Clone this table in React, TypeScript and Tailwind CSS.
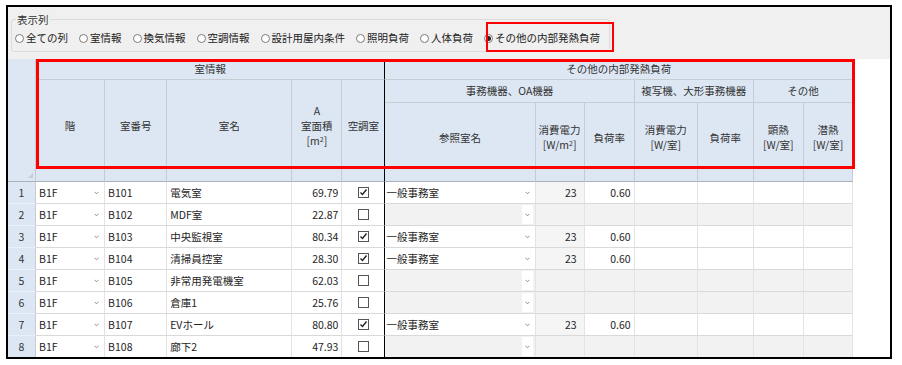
import React from "react";

const options = [
  "全ての列",
  "室情報",
  "換気情報",
  "空調情報",
  "設計用屋内条件",
  "照明負荷",
  "人体負荷",
  "その他の内部発熱負荷",
];

const rows = [
  { no: 1, floor: "B1F", num: "B101", name: "電気室", area: "69.79", ac: true, ref: "一般事務室" },
  { no: 2, floor: "B1F", num: "B102", name: "MDF室", area: "22.87", ac: false, ref: "" },
  { no: 3, floor: "B1F", num: "B103", name: "中央監視室", area: "80.34", ac: true, ref: "一般事務室" },
  { no: 4, floor: "B1F", num: "B104", name: "清掃員控室", area: "28.30", ac: true, ref: "一般事務室" },
  { no: 5, floor: "B1F", num: "B105", name: "非常用発電機室", area: "62.03", ac: false, ref: "" },
  { no: 6, floor: "B1F", num: "B106", name: "倉庫1", area: "25.76", ac: false, ref: "" },
  { no: 7, floor: "B1F", num: "B107", name: "EVホール", area: "80.80", ac: true, ref: "一般事務室" },
  { no: 8, floor: "B1F", num: "B108", name: "廊下2", area: "47.93", ac: false, ref: "" },
];

const widths = [28, 69, 62, 125, 50, 43, 150, 49, 50, 63, 56, 50, 49];

const Chevron = () => (
  <svg width="5" height="4" viewBox="0 0 5 4" className="block">
    <polyline points="0.5,0.8 2.5,2.8 4.5,0.8" fill="none" stroke="#8a8a8a" strokeWidth="1" />
  </svg>
);

const Radio = ({ label, checked }: { label: string; checked?: boolean }) => (
  <span className="flex items-center gap-[2px] shrink-0 whitespace-nowrap">
    <span className="w-[9px] h-[9px] rounded-full border border-[#7a7a7a] bg-white flex items-center justify-center">
      {checked && <span className="w-[5px] h-[5px] rounded-full bg-[#222]" />}
    </span>
    <span>{label}</span>
  </span>
);

const Check = ({ on }: { on: boolean }) => (
  <span className="mx-auto block w-[11px] h-[11px] border border-[#555] bg-white">
    {on && (
      <svg width="9" height="9" viewBox="0 0 9 9" className="block">
        <polyline points="1.5,4.5 3.5,6.5 7.5,1.5" fill="none" stroke="#222" strokeWidth="1.4" />
      </svg>
    )}
  </span>
);

const hd = "bg-[#dde7f3] border-r border-b border-[#c6ccd4] font-normal text-[#333] text-center";
const leaf = "bg-[#dde7f3] border-r border-b border-r-[#c6ccd4] border-b-[#aab1ba] font-normal text-[#333] text-center leading-[15px] pb-[10px]";
const td = "h-[22px] border-r border-b border-r-[#e3e3e3] border-b-[#d9d9d9] px-[3px] whitespace-nowrap overflow-hidden";

export default function App() {
  return (
    <div className="w-[902px] h-[365px] bg-white pt-[5px] pl-[6px] font-['Noto_Sans_CJK_JP',sans-serif] text-[10.5px] text-[#1e1e1e]">
      <div className="relative w-[886px] h-[354px] border-2 border-black flex flex-col overflow-hidden">
        <div className="h-[52px] bg-[#f0f0f0] pl-[3px] pt-[6px] shrink-0">
          <fieldset className="w-[599px] h-[39px] border border-[#dcdcdc] rounded-[3px] px-[3px]">
            <legend className="ml-[1px] px-[1px] leading-[13px] text-[#333]">表示列</legend>
            <div className="flex items-center gap-[11px] mt-[5px] leading-[14px] text-[#222]">
              {options.map((o, i) => (
                <Radio key={o} label={o} checked={i === options.length - 1} />
              ))}
            </div>
          </fieldset>
        </div>

        <div className="flex-1 bg-white">
          <table className="table-fixed border-separate border-spacing-0 w-[845px]">
            <colgroup>
              {widths.map((w, i) => (
                <col key={i} style={{ width: w }} />
              ))}
            </colgroup>
            <thead>
              <tr className="h-[21px]">
                <th rowSpan={3} className="relative bg-[#dde7f3] border-r border-b border-r-[#c6ccd4] border-b-[#aab1ba]">
                  <svg width="5" height="5" viewBox="0 0 5 5" className="absolute right-[2px] bottom-[3px]">
                    <polygon points="5,0 5,5 0,5" fill="#c3ccd8" />
                  </svg>
                </th>
                <th colSpan={5} className={`${hd} border-r-black`}>室情報</th>
                <th colSpan={7} className={hd}>その他の内部発熱負荷</th>
              </tr>
              <tr className="h-[23px]">
                <th rowSpan={2} className={leaf}>階</th>
                <th rowSpan={2} className={leaf}>室番号</th>
                <th rowSpan={2} className={leaf}>室名</th>
                <th rowSpan={2} className={leaf}>
                  A<br />室面積<br />[m<sup className="text-[7px]">2</sup>]
                </th>
                <th rowSpan={2} className={`${leaf} border-r-black`}>空調室</th>
                <th colSpan={3} className={hd}>事務機器、OA機器</th>
                <th colSpan={2} className={hd}>複写機、大形事務機器</th>
                <th colSpan={2} className={hd}>その他</th>
              </tr>
              <tr className="h-[79px]">
                <th className={leaf}>参照室名</th>
                <th className={leaf}>
                  消費電力<br />[W/m<sup className="text-[7px]">2</sup>]
                </th>
                <th className={leaf}>負荷率</th>
                <th className={leaf}>消費電力<br />[W/室]</th>
                <th className={leaf}>負荷率</th>
                <th className={leaf}>顕熱<br />[W/室]</th>
                <th className={leaf}>潜熱<br />[W/室]</th>
              </tr>
            </thead>
            <tbody>
              {rows.map((r) => {
                const has = r.ref !== "";
                const gray = has ? "" : "bg-[#f2f2f2]";
                return (
                  <tr key={r.no}>
                    <td className="h-[22px] bg-[#dde7f3] border-r border-b border-r-[#c6ccd4] border-b-[#eaf0f7] text-center text-[#333]">
                      {r.no}
                    </td>
                    <td className={td}>
                      <div className="flex items-center justify-between pr-[2px]">
                        <span>{r.floor}</span>
                        <Chevron />
                      </div>
                    </td>
                    <td className={td}>{r.num}</td>
                    <td className={td}>{r.name}</td>
                    <td className={`${td} text-right`}>{r.area}</td>
                    <td className={`${td} border-r-black`}>
                      <Check on={r.ac} />
                    </td>
                    <td className={`${td} ${gray} relative pl-[1px]`}>
                      <span>{r.ref}</span>
                      <span className={`absolute right-[2px] top-[1px] bottom-[1px] w-[11px] flex items-center justify-center ${has ? "" : "bg-white"}`}>
                        <Chevron />
                      </span>
                    </td>
                    <td className={`${td} text-right pr-[7px] ${has ? "bg-[#f5f5f5]" : gray}`}>{has ? "23" : ""}</td>
                    <td className={`${td} text-right ${gray}`}>{has ? "0.60" : ""}</td>
                    <td className={`${td} ${gray}`}></td>
                    <td className={`${td} ${gray}`}></td>
                    <td className={`${td} ${gray}`}></td>
                    <td className={`${td} ${gray}`}></td>
                  </tr>
                );
              })}
            </tbody>
          </table>
        </div>

        <div className="absolute left-[478px] top-[15px] w-[128px] h-[30px] border-2 border-[#ff0000] pointer-events-none" />
        <div className="absolute left-[28px] top-[52px] w-[819px] h-[110px] border-[3px] border-[#ff0000] pointer-events-none" />
      </div>
    </div>
  );
}
